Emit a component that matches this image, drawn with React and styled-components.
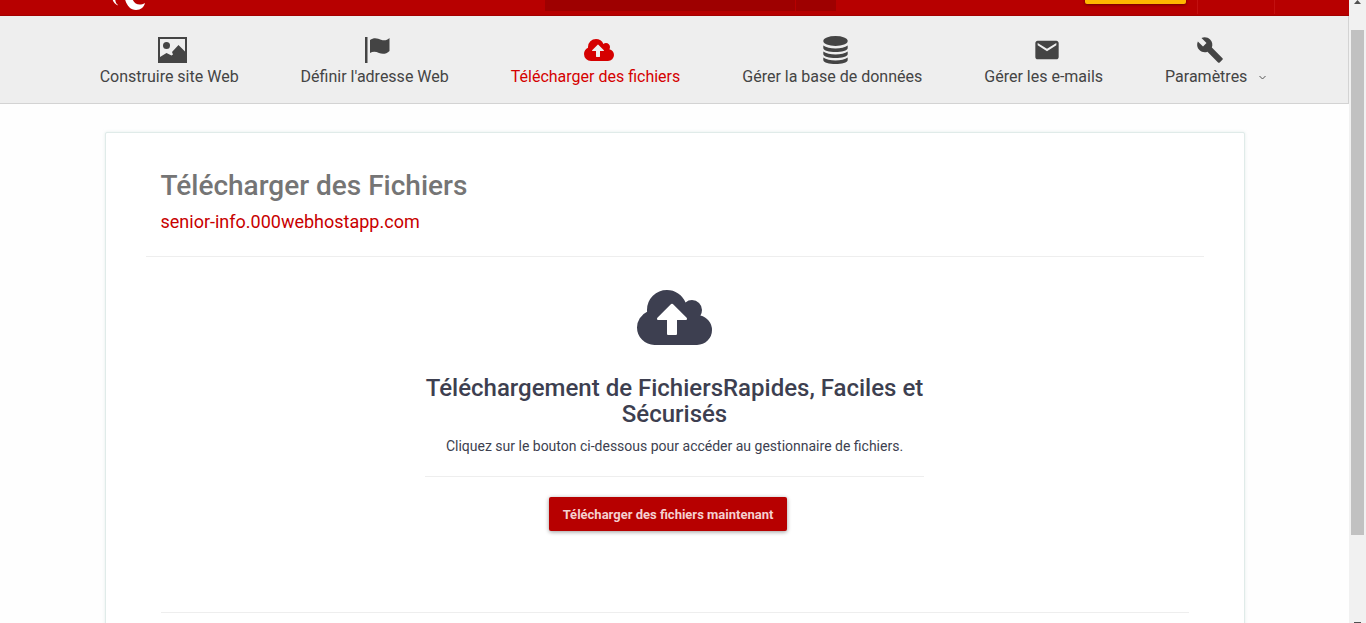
import React from "react";
import styled, { createGlobalStyle } from "styled-components";
import { MdEmail, MdBuild } from "react-icons/md";

const GlobalStyle = createGlobalStyle`
  *, *::before, *::after { box-sizing: border-box; }
  body {
    margin: 0;
    background: #fefefe;
    color: #3d3f50;
    font-family: Roboto, "Liberation Sans", sans-serif;
    font-size: 14px;
  }
  h1, h2, p, ul { margin: 0; padding: 0; }
`;

const Frame = styled.div`
  display: flex;
  height: 100vh;
  overflow: hidden;
`;

const Page = styled.div`
  flex: 1;
  min-width: 0;
  overflow: hidden;
`;

/* The page is scrolled, so only the foot of the header is in view. */
const Header = styled.header`
  display: grid;
  grid-template-columns: 1fr auto 1fr;
  height: 60px;
  margin-top: -44px;
  padding: 0 74px 0 106px;
  background: #b70000;
  border-bottom: 1px solid #a30000;
`;

const Logo = styled.a`
  align-self: end;
  height: 59px;
  svg { display: block; }
`;

const Search = styled.form`
  display: flex;
  gap: 1px;
  align-self: end;
  padding-bottom: 4px;
`;

const SearchInput = styled.input`
  width: 250px;
  height: 38px;
  border: 0;
  padding: 0 12px;
  background: #9e0000;
  color: #fff;
`;

const SearchButton = styled.button`
  width: 40px;
  height: 38px;
  border: 0;
  background: #9e0000;
`;

const Account = styled.div`
  display: flex;
  justify-content: flex-end;
  align-items: flex-start;
`;

const Upgrade = styled.button`
  width: 101px;
  height: 34px;
  margin: 14px 11px 0 0;
  border: 0;
  border-radius: 2px;
  background: #ffb800;
  box-shadow: 0 1px 3px rgba(0, 0, 0, 0.4);
`;

const AccountLink = styled.a`
  width: ${(p) => p.$width}px;
  height: 58px;
  border-left: 1px solid #c21010;
`;

const Nav = styled.nav`
  height: 88px;
  background: #eee;
  border: solid #d3d3d3;
  border-width: 0 1px 1px 0;
`;

const NavList = styled.ul`
  display: flex;
  justify-content: center;
  gap: 62px;
  padding-top: 18px;
  padding-left: 18px;
  list-style: none;
`;

const NavLink = styled.a`
  display: flex;
  flex-direction: column;
  align-items: center;
  color: ${(p) => (p.$active ? "#d50000" : "#444")};
  font-size: 16px;
  line-height: 22px;
  text-decoration: none;
  white-space: nowrap;
`;

const IconBox = styled.span`
  display: flex;
  align-items: center;
  justify-content: center;
  height: 32px;
  padding: ${(p) => (p.$menu ? "0 12px 0 0" : "0 0 0 6px")};
`;

const Label = styled.span`
  display: flex;
  align-items: center;
  gap: 12px;
`;

const Card = styled.main`
  max-width: 1140px;
  min-height: 640px;
  margin: 28px auto 0;
  padding: 36px 40px;
  background: #fff;
  border: 1px solid #e0ebe9;
  border-radius: 2px;
  box-shadow: 0 0 3px rgba(200, 220, 216, 0.5);
`;

const CardHeader = styled.header`
  padding: 0 15px 22px;
  border-bottom: 1px solid #eee;
`;

const Title = styled.h1`
  color: #757575;
  font-size: 28px;
  font-weight: 500;
  line-height: 34px;
`;

const SiteLink = styled.a`
  display: block;
  margin-top: 7px;
  color: #c80000;
  font-size: 18px;
  line-height: 24px;
  text-decoration: none;
`;

const Upload = styled.section`
  display: flex;
  flex-direction: column;
  align-items: center;
  max-width: 499px;
  margin: 0 auto;
  padding-top: 33px;
  text-align: center;
`;

const UploadTitle = styled.h2`
  margin-top: 30px;
  font-size: 24px;
  font-weight: 500;
  line-height: 26px;
`;

const UploadText = styled.p`
  width: 100%;
  margin-top: 9px;
  padding-bottom: 20px;
  border-bottom: 1px solid #eee;
  font-size: 14px;
  line-height: 20px;
`;

const UploadAction = styled.div`
  padding: 20px 13px 81px 0;
`;

const UploadButton = styled.button`
  height: 34px;
  padding: 0 14px;
  border: 0;
  border-radius: 2px;
  background: #b70000;
  box-shadow: 0 1px 4px rgba(0, 0, 0, 0.4);
  color: #f5d0d0;
  font-family: inherit;
  font-size: 13px;
  font-weight: 700;
`;

const Divider = styled.hr`
  margin: 0 15px;
  border: 0;
  border-top: 1px solid #eee;
`;

const ScrollTrack = styled.div`
  display: flex;
  flex-direction: column;
  align-items: center;
  justify-content: space-between;
  width: 17px;
  background: #f1f1f1;
`;

const ScrollThumb = styled.div`
  width: 13px;
  height: 81vh;
  margin: 26px 0 auto;
  background: #c1c1c1;
`;

const ScrollEnd = styled.div`
  width: 7px;
  height: 1px;
  background: #505050;
`;

const ScrollArrow = () => (
  <svg width="7" height="4" viewBox="0 0 7 4" fill="#505050">
    <path d="M0 4 3.5 0 7 4z" />
  </svg>
);

const CloudUpload = ({ width, height, color }) => (
  <svg width={width} height={height} viewBox="0 128 1920 1408" fill={color}>
    <path d="M1280 864q0-14-9-23l-352-352q-9-9-23-9t-23 9l-351 351q-10 12-10 24 0 14 9 23t23 9h224v352q0 13 9.500 22.500t22.500 9.500h192q13 0 22.500-9.500t9.500-22.500v-352h224q13 0 22.500-9.500t9.500-22.500zm640 288q0 159-112.500 271.500t-271.500 112.500h-1088q-185 0-316.500-131.500t-131.500-316.500q0-130 70-240t188-165q-2-30-2-43 0-212 150-362t362-150q156 0 285.500 87t188.500 231q71-62 166-62 106 0 181 75t75 181q0 76-41 138 130 31 213.500 135.500t83.500 238.500z" />
  </svg>
);

const ImageIcon = () => (
  <svg width="29" height="26" viewBox="0 0 29 26" fill="#444">
    <path fillRule="evenodd" d="M0 0h29v26H0zM2 2v18l6.500-4 5 2.500 1.500-1-1-2.500 6.500-7 6.500 6.500V2z" />
    <circle cx="8.500" cy="8.500" r="3.500" />
  </svg>
);

const FlagIcon = () => (
  <svg width="25" height="26" viewBox="0 0 25 26" fill="#444">
    <path d="M0 0h2.500v26H0zM5 3c4-3 8-1.500 11-.3 3 1.200 6 .8 8.500-1.700v13c-3 3-7 3.500-10.500 2C11 14.500 8 14 5 16z" />
  </svg>
);

const DatabaseIcon = () => (
  <svg width="25" height="28" viewBox="0 0 25 28" fill="#444">
    <ellipse cx="12.500" cy="5" rx="12.200" ry="5" />
    <path d="M.3 9.500c5 4 19.400 4 24.400 0v2.500c0 5.300-24.400 5.300-24.400 0zM.3 15.500c5 4 19.400 4 24.400 0V18c0 5.300-24.400 5.300-24.400 0zM.3 21.500c5 4 19.400 4 24.400 0V24c0 5.300-24.400 5.300-24.400 0z" />
  </svg>
);

const Chevron = () => (
  <svg width="7" height="5" viewBox="0 0 7 5" fill="none" stroke="#555">
    <path d="M.5 1 3.500 4l3-3" />
  </svg>
);

const items = [
  { label: "Construire site Web", icon: <ImageIcon /> },
  { label: "Définir l'adresse Web", icon: <FlagIcon /> },
  { label: "Télécharger des fichiers", icon: <CloudUpload width={30} height={22} color="#d50000" />, active: true },
  { label: "Gérer la base de données", icon: <DatabaseIcon /> },
  { label: "Gérer les e-mails", icon: <MdEmail size={28} /> },
  { label: "Paramètres", icon: <MdBuild size={28} />, menu: true },
];

export default function App() {
  return (
    <>
      <GlobalStyle />
      <Frame>
        <Page>
          <Header>
            <Logo href="#" aria-label="Accueil">
              <svg width="44" height="59" viewBox="0 0 44 59" fill="#fff">
                <path d="M6 40c0 4 2 8 6 9.500l-.5-1C9.500 47 9 44 9 40zM18 38c1 9 5 16 12 16 5 0 8-3 9-7-6 3.500-11 1-13-5z" />
              </svg>
            </Logo>
            <Search onSubmit={(e) => e.preventDefault()}>
              <SearchInput type="search" aria-label="Rechercher" />
              <SearchButton type="submit" aria-label="Rechercher" />
            </Search>
            <Account>
              <Upgrade type="button" aria-label="Mettre à niveau" />
              <AccountLink href="#" $width={77} aria-label="Messages" />
              <AccountLink href="#" $width={1} aria-label="Compte" />
            </Account>
          </Header>
          <Nav>
            <NavList>
              {items.map((item) => (
                <li key={item.label}>
                  <NavLink href="#" $active={item.active}>
                    <IconBox $menu={item.menu}>{item.icon}</IconBox>
                    <Label>
                      {item.label}
                      {item.menu && <Chevron />}
                    </Label>
                  </NavLink>
                </li>
              ))}
            </NavList>
          </Nav>
          <Card>
            <CardHeader>
              <Title>Télécharger des Fichiers</Title>
              <SiteLink href="#">senior-info.000webhostapp.com</SiteLink>
            </CardHeader>
            <Upload>
              <CloudUpload width={75} height={55} color="#3d3f50" />
              <UploadTitle>Téléchargement de FichiersRapides, Faciles et Sécurisés</UploadTitle>
              <UploadText>Cliquez sur le bouton ci-dessous pour accéder au gestionnaire de fichiers.</UploadText>
              <UploadAction>
                <UploadButton type="button">Télécharger des fichiers maintenant</UploadButton>
              </UploadAction>
            </Upload>
            <Divider />
          </Card>
        </Page>
        <ScrollTrack aria-hidden="true">
          <ScrollArrow />
          <ScrollThumb />
          <ScrollEnd />
        </ScrollTrack>
      </Frame>
    </>
  );
}
